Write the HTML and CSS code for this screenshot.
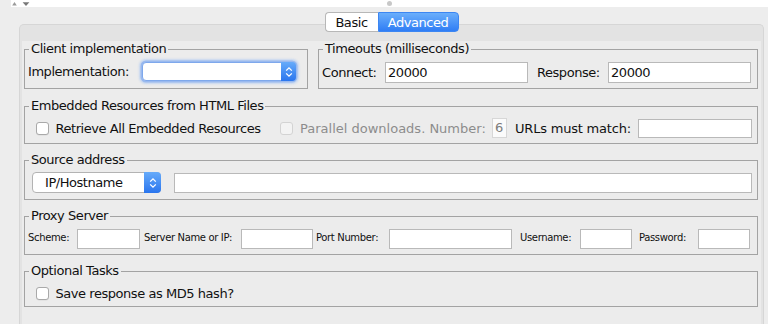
FILE: index.html
```html
<!DOCTYPE html>
<html>
<head>
<meta charset="utf-8">
<link rel="stylesheet" href="styles.css">
</head>
<body>
<div class="topbar">
  <svg class="arrows" width="20" height="7" viewBox="0 0 20 7"><polygon points="1.2,5.5 3.5,2 5.8,5.5" fill="#9a9a9a"/><polygon points="11.6,2.2 18.4,2.2 15,6" fill="#787878"/></svg>
  <span class="grip"></span>
  <span></span>
</div>
<div class="tabs">
  <span class="tab tab-basic">Basic</span><span class="tab tab-adv">Advanced</span>
</div>
<div class="panel">
  <div class="content">
    <div class="row-top">
      <fieldset class="group group-client">
        <legend>Client implementation</legend>
        <div class="body-client">
          <span class="lbl pl3">Implementation:</span>
          <div class="combo combo-impl">
            <span class="combo-text"></span>
            <span class="combo-arrow"><svg width="8" height="12" viewBox="0 0 8 12"><polyline points="1.2,4.6 4,1.8 6.8,4.6" fill="none" stroke="#fff" stroke-width="1.3"/><polyline points="1.2,7.4 4,10.2 6.8,7.4" fill="none" stroke="#fff" stroke-width="1.3"/></svg></span>
          </div>
        </div>
      </fieldset>
      <fieldset class="group group-timeouts">
        <legend>Timeouts (milliseconds)</legend>
        <div class="body-timeouts">
          <span class="lbl pl3">Connect:</span>
          <input class="field h21" type="text" value="20000">
          <span class="lbl pl9">Response:</span>
          <input class="field h21" type="text" value="20000">
        </div>
      </fieldset>
    </div>

    <fieldset class="group group-embedded">
      <legend>Embedded Resources from HTML Files</legend>
      <div class="body-embedded">
        <label class="check-item first"><input class="check" type="checkbox"><span>Retrieve All Embedded Resources</span></label>
        <label class="check-item disabled"><input class="check" type="checkbox" disabled><span class="grey">Parallel downloads. Number:</span></label>
        <span class="num-field">6</span>
        <span class="lbl pl8 urls">URLs must match:</span>
        <input class="field h19" type="text" value="">
      </div>
    </fieldset>

    <fieldset class="group group-source">
      <legend>Source address</legend>
      <div class="body-source">
        <div class="combo combo-ip">
          <span class="combo-text">IP/Hostname</span>
          <span class="combo-arrow"><svg width="8" height="12" viewBox="0 0 8 12"><polyline points="1.2,4.6 4,1.8 6.8,4.6" fill="none" stroke="#fff" stroke-width="1.3"/><polyline points="1.2,7.4 4,10.2 6.8,7.4" fill="none" stroke="#fff" stroke-width="1.3"/></svg></span>
        </div>
        <input class="field" type="text" value="">
      </div>
    </fieldset>

    <fieldset class="group group-proxy">
      <legend>Proxy Server</legend>
      <div class="body-proxy">
        <span class="lbl pl3">Scheme:</span>
        <input class="field" type="text" value="">
        <span class="lbl pl4">Server Name or IP:</span>
        <input class="field" type="text" value="">
        <span class="lbl pl3">Port Number:</span>
        <input class="field" type="text" value="">
        <span class="lbl pl8">Username:</span>
        <input class="field" type="text" value="">
        <span class="lbl pl7">Password:</span>
        <input class="field" type="text" value="">
      </div>
    </fieldset>

    <fieldset class="group group-optional">
      <legend>Optional Tasks</legend>
      <div class="body-optional">
        <label class="check-item"><input class="check" type="checkbox"><span>Save response as MD5 hash?</span></label>
      </div>
    </fieldset>
  </div>
</div>
</body>
</html>
```

FILE: styles.css
```css
* { box-sizing: border-box; }
html, body { margin: 0; padding: 0; }
body {
  width: 768px;
  height: 324px;
  overflow: hidden;
  background: #ededed;
  font-family: "DejaVu Sans", Verdana, sans-serif;
  font-size: 13px;
  letter-spacing: -0.45px;
  color: #111;
}

/* top split-pane strip */
.topbar {
  display: grid;
  grid-template-columns: 1fr auto 1fr;
  align-items: center;
  height: 7px;
  margin-left: 11px;
  background: #fff;
}
.arrows { display: block; }
.grip {
  width: 5px;
  height: 5px;
  border-radius: 50%;
  background: #c8c8c8;
}

/* segmented tabs */
.tabs {
  position: relative;
  z-index: 1;
  display: flex;
  justify-content: center;
  height: 20px;
  margin: 5px 4px 0 19px;
}
.tab {
  display: flex;
  align-items: center;
  justify-content: center;
  height: 20px;
}
.tab-basic {
  width: 53px;
  background: #fff;
  border: 1px solid #b7b7b7;
  border-right: none;
  border-radius: 4px 0 0 4px;
  color: #111;
}
.tab-adv {
  width: 81px;
  background: linear-gradient(#6aaefb, #2f7df5);
  border: 1px solid #3c86f2;
  border-radius: 0 4px 4px 0;
  color: #fff;
}

/* tab panel */
.panel {
  margin: -8px 4px 0 19px;
  padding: 16px 2px 0;
  background: #e3e3e3;
  border: 1px solid #d6d6d6;
  border-bottom: none;
  border-radius: 5px 5px 0 0;
}
.content {
  background: #ececec;
  padding: 0 3px 17px 2px;
}

/* titled groups */
.group {
  margin: 0;
  padding: 0;
  min-width: 0;
  border: 1px solid #a3a3a3;
}
.group legend {
  margin-left: 4px;
  padding: 0 2px;
  line-height: 16px;
  font-size: 13px;
}
.row-top { display: flex; gap: 10px; }
.group-client { flex: 0 0 284px; }
.group-timeouts { flex: 1 1 auto; }
.group-embedded { margin-top: 9px; }
.group-source, .group-proxy, .group-optional { margin-top: 8px; }

.lbl { white-space: nowrap; }
.pl3 { padding-left: 3px; }
.pl4 { padding-left: 4px; }
.pl7 { padding-left: 7px; }
.pl8 { padding-left: 8px; }
.pl9 { padding-left: 9px; }

/* text fields */
.field {
  display: block;
  width: 100%;
  height: 20px;
  margin: 0;
  padding: 0 2px;
  border: 1px solid #b9b9b9;
  background: #fff;
  font: inherit;
  letter-spacing: inherit;
  color: #111;
  outline: none;
}
.h21 { height: 21px; }
.h19 { height: 19px; }

/* combo boxes */
.combo {
  display: flex;
  height: 19px;
  background: #fff;
  border: 1px solid #b3b3b3;
  border-radius: 4px;
}
.combo-text {
  flex: 1;
  padding-left: 12px;
  line-height: 19px;
}
.combo-arrow {
  display: flex;
  align-items: center;
  justify-content: center;
  width: 15px;
  margin: -1px -1px -1px 0;
  border-radius: 0 4px 4px 0;
  background: linear-gradient(#66abfa, #2a75ee);
}
.combo-impl {
  border-color: #7ea8ec;
  box-shadow: 0 0 0 1.5px rgba(116, 162, 238, 0.55), 0 0 2px 2.5px rgba(150, 188, 245, 0.45);
}
.combo-ip { height: 21px; }
.combo-ip .combo-arrow { width: 17px; }

/* checkboxes */
.check {
  appearance: none;
  -webkit-appearance: none;
  width: 13px;
  height: 13px;
  margin: 0;
  flex: none;
  background: #fff;
  border: 1px solid #a9a9a9;
  border-radius: 3px;
  box-shadow: 0 0.5px 0.5px rgba(0, 0, 0, 0.08);
}
.check:disabled {
  background: #f3f3f3;
  border-color: #d3d3d3;
  box-shadow: none;
}
.check-item {
  display: flex;
  align-items: center;
  gap: 7px;
  white-space: nowrap;
}
.grey { color: #8c8c8c; letter-spacing: 0; }

/* rows */
.body-client {
  display: grid;
  grid-template-columns: 117px 154px;
  align-items: center;
  padding: 5px 0 7px;
}
.body-timeouts {
  display: grid;
  grid-template-columns: 66px 143px 80px 143px;
  align-items: center;
  padding: 5px 0;
}
.body-embedded {
  display: grid;
  grid-template-columns: 255px 212px 15px 131px 114px;
  align-items: center;
  padding: 4px 0 5px;
}
.check-item.first { padding-left: 10.5px; }
.num-field {
  display: block;
  width: 15px;
  height: 20px;
  padding-left: 2px;
  line-height: 18px;
  background: #fbfbfb;
  border: 1px solid #d7d7d7;
  color: #7d7d7d;
}
.urls { letter-spacing: -0.2px; }
.body-source {
  display: grid;
  grid-template-columns: 129px 1fr;
  column-gap: 13px;
  align-items: center;
  padding: 4px 5px 6px 7px;
}
.body-proxy {
  display: grid;
  grid-template-columns: 52px 63px 101px 72px 76px 123px 68px 52px 66px 52px;
  align-items: center;
  padding: 5px 0;
  font-size: 10px;
  letter-spacing: -0.35px;
}
.body-proxy .lbl { padding-bottom: 3px; }
.body-optional {
  display: flex;
  align-items: center;
  height: 27px;
  padding: 4px 0 3px 10.5px;
}
```
